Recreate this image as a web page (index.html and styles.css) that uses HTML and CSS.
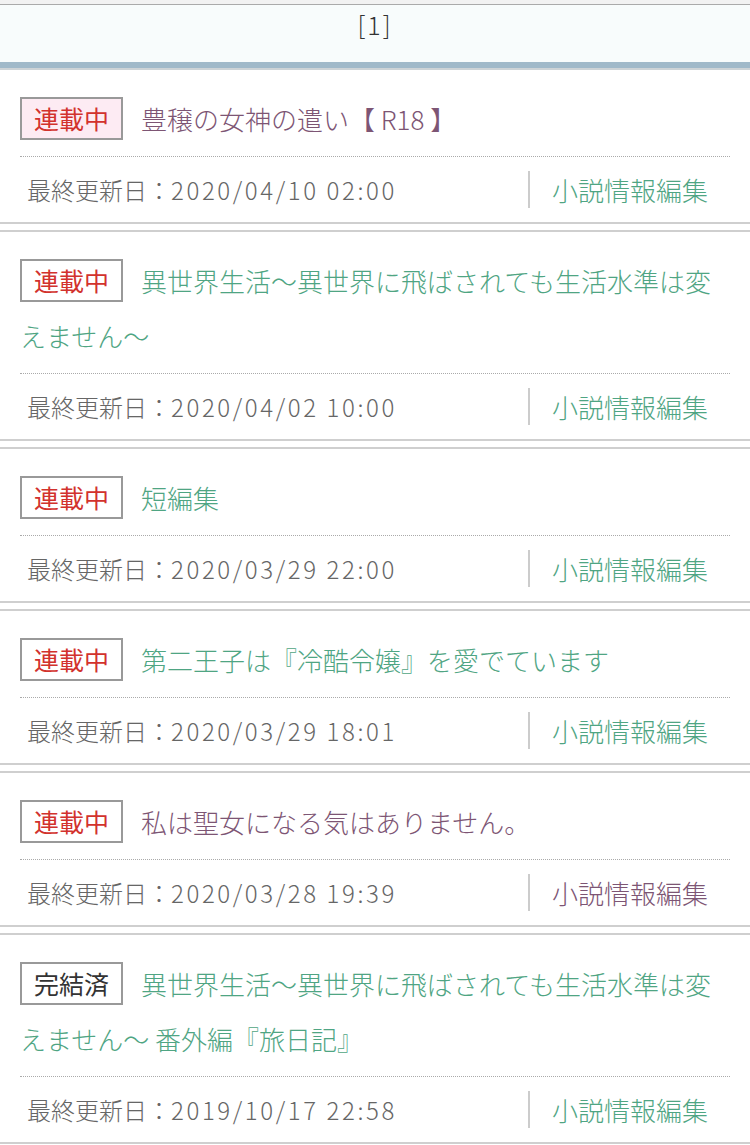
FILE: index.html
```html
<!DOCTYPE html>
<html lang="ja">
<head>
<meta charset="utf-8">
<link rel="stylesheet" href="styles.css">
</head>
<body>
<div class="pager">[1]</div>
<ul class="novel-list">
  <li class="novel">
    <div class="novel-title"><span class="badge badge-r18">連載中</span><a class="title-link visited" href="#">豊穣の女神の遣い【 R18 】</a></div>
    <div class="novel-meta">
      <span class="date">最終更新日：<span class="date-value">2020/04/10 02:00</span></span>
      <a class="edit-link" href="#">小説情報編集</a>
    </div>
  </li>
  <li class="novel">
    <div class="novel-title"><span class="badge">連載中</span><a class="title-link" href="#">異世界生活〜異世界に飛ばされても生活水準は変えません〜</a></div>
    <div class="novel-meta">
      <span class="date">最終更新日：<span class="date-value">2020/04/02 10:00</span></span>
      <a class="edit-link" href="#">小説情報編集</a>
    </div>
  </li>
  <li class="novel">
    <div class="novel-title"><span class="badge">連載中</span><a class="title-link" href="#">短編集</a></div>
    <div class="novel-meta">
      <span class="date">最終更新日：<span class="date-value">2020/03/29 22:00</span></span>
      <a class="edit-link" href="#">小説情報編集</a>
    </div>
  </li>
  <li class="novel">
    <div class="novel-title"><span class="badge">連載中</span><a class="title-link" href="#">第二王子は『冷酷令嬢』を愛でています</a></div>
    <div class="novel-meta">
      <span class="date">最終更新日：<span class="date-value">2020/03/29 18:01</span></span>
      <a class="edit-link" href="#">小説情報編集</a>
    </div>
  </li>
  <li class="novel">
    <div class="novel-title"><span class="badge">連載中</span><a class="title-link visited" href="#">私は聖女になる気はありません。</a></div>
    <div class="novel-meta">
      <span class="date">最終更新日：<span class="date-value">2020/03/28 19:39</span></span>
      <a class="edit-link visited" href="#">小説情報編集</a>
    </div>
  </li>
  <li class="novel">
    <div class="novel-title"><span class="badge badge-done">完結済</span><a class="title-link" href="#">異世界生活〜異世界に飛ばされても生活水準は変えません〜 番外編『旅日記』</a></div>
    <div class="novel-meta">
      <span class="date">最終更新日：<span class="date-value">2019/10/17 22:58</span></span>
      <a class="edit-link" href="#">小説情報編集</a>
    </div>
  </li>
</ul>
</body>
</html>
```

FILE: styles.css
```css
body {
  margin: 0;
  background: #fff;
  font-family: "Noto Sans CJK JP", sans-serif;
  font-weight: 300;
  color: #333;
}

a {
  text-decoration: none;
}

.pager {
  margin-top: 4px;
  box-shadow: 0 -4px 0 #f2f2f2;
  border-top: 1px solid #aaa;
  border-bottom: 6px solid #a0b9c9;
  background: #f8fcfc;
  text-align: center;
  font-size: 25px;
  line-height: 38px;
  padding-bottom: 19px;
  letter-spacing: 2px;
  color: #333;
}

.novel-list {
  list-style: none;
  margin: 0;
  padding: 0;
  border-top: 2px solid #cdd3d6;
}

.novel {
  padding: 0 20px;
  border-bottom: 2px solid #cfcfcf;
}

.novel + .novel {
  margin-top: 6px;
  border-top: 2px solid #cfcfcf;
}

.novel-title {
  padding-top: 21px;
  font-size: 26px;
  line-height: 55px;
  margin-bottom: 10px;
}

.badge {
  display: inline-block;
  vertical-align: top;
  margin-top: 6px;
  height: 39px;
  line-height: 39px;
  padding: 0 12px;
  border: 2px solid #999;
  font-size: 25px;
  font-weight: 400;
  color: #d2322d;
  background: #fff;
  margin-right: 18px;
}

.badge-r18 {
  background: #fdebf3;
}

.badge-done {
  color: #333;
}

.title-link {
  color: #4fa583;
}

.title-link.visited,
.edit-link.visited {
  color: #7d5574;
}

.novel-meta {
  display: flex;
  align-items: center;
  height: 65px;
  border-top: 1px dotted #aaa;
}

.date {
  flex: 1;
  padding-left: 7px;
  font-size: 24px;
  color: #666;
}

.date-value {
  letter-spacing: 2.6px;
}

.edit-link {
  width: 200px;
  height: 37px;
  line-height: 37px;
  border-left: 2px solid #ccc;
  text-align: center;
  font-size: 26px;
  color: #4fa583;
}
```
